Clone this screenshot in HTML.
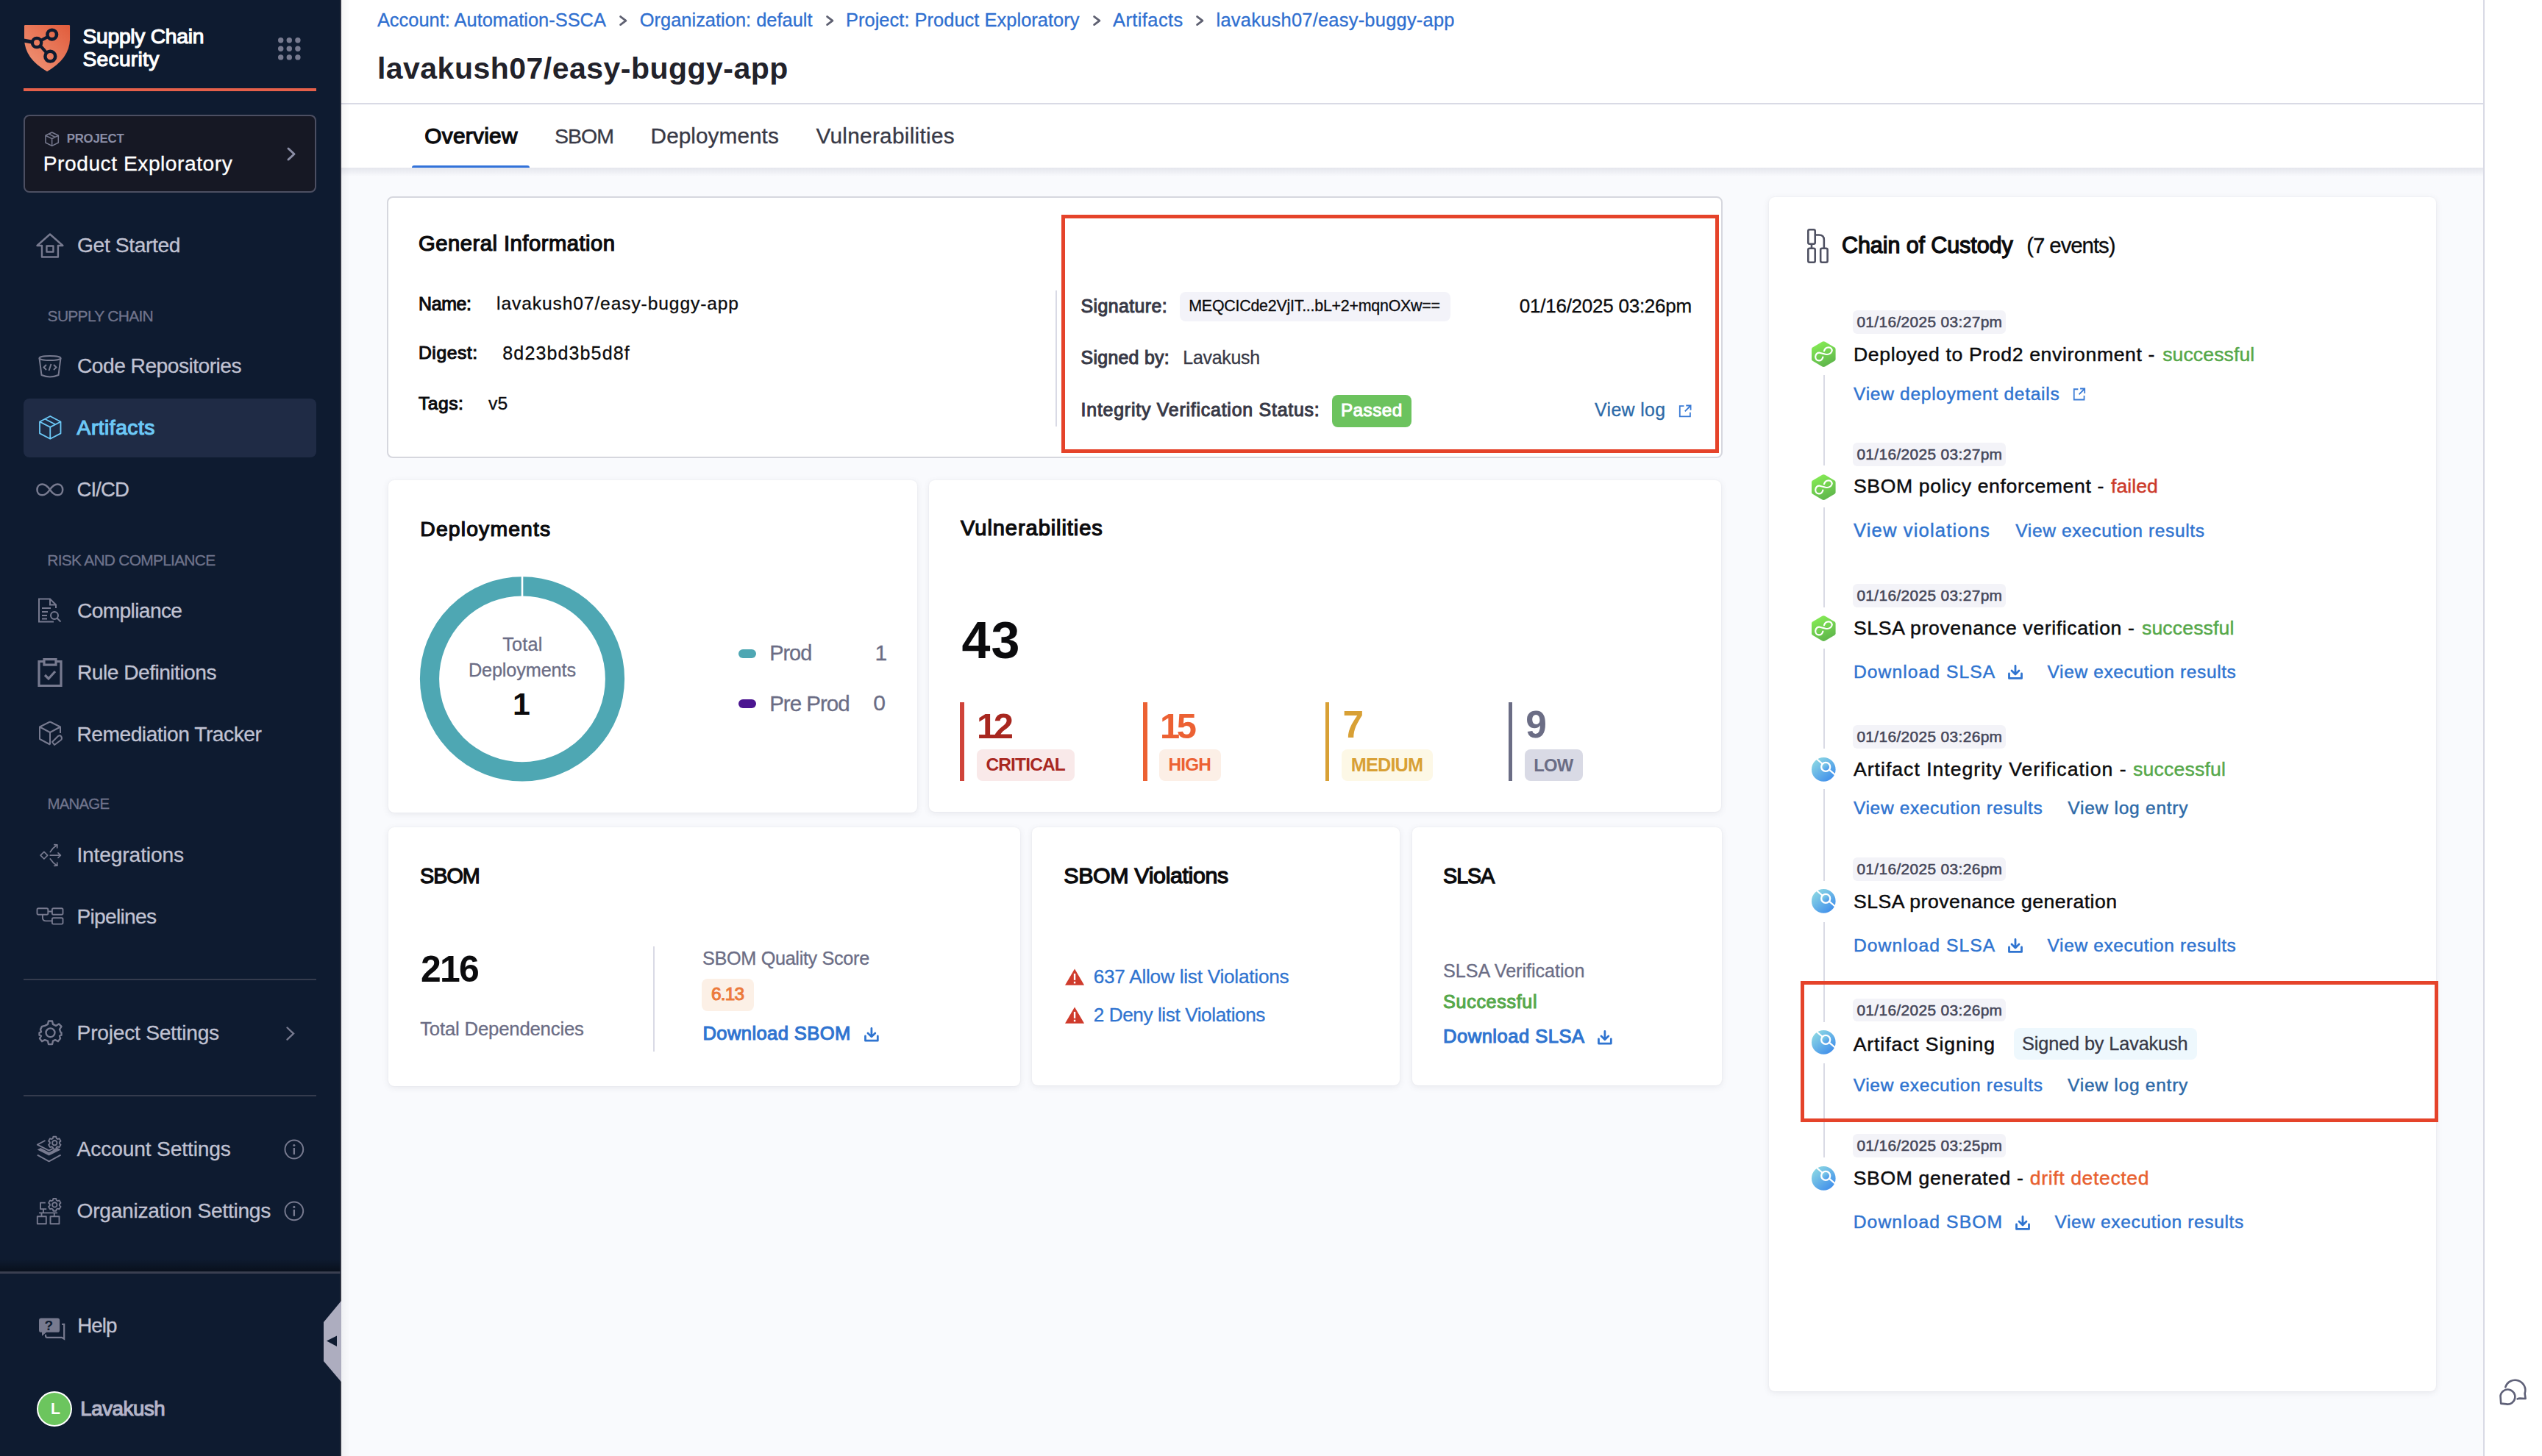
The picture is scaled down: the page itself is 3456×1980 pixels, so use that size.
<!DOCTYPE html>
<html><head><meta charset="utf-8"><title>Artifact Overview</title>
<style>
html,body{margin:0;padding:0;width:3456px;height:1980px;overflow:hidden;background:#f9fafd;}
body{position:relative;font-family:"Liberation Sans",sans-serif;}
.t{position:absolute;white-space:nowrap;line-height:1;}
.r{position:absolute;box-sizing:border-box;}
svg.r{overflow:visible;}
</style></head><body>
<div class="r" style="left:0.00px;top:0.00px;width:464.00px;height:1980.00px;background:#0e1b30;"></div>
<div class="r" style="left:462.00px;top:0.00px;width:2.00px;height:1980.00px;background:#2e3240;"></div>
<div class="r" style="left:464.00px;top:0.00px;width:2912.00px;height:228.00px;background:#fff;"></div>
<div class="r" style="left:464.00px;top:140.00px;width:2912.00px;height:2.00px;background:#d9dae5;"></div>
<div class="r" style="left:464.00px;top:228.00px;width:2912.00px;height:12.00px;background:linear-gradient(rgba(200,202,214,0.42),rgba(249,250,253,0));"></div>
<div class="r" style="left:464.00px;top:0.00px;width:12.00px;height:1980.00px;background:linear-gradient(90deg,rgba(0,0,0,0.04),rgba(0,0,0,0));"></div>
<div class="r" style="left:3376.00px;top:0.00px;width:2.00px;height:1980.00px;background:#d9dae5;"></div>
<div class="r" style="left:3378.00px;top:0.00px;width:78.00px;height:1980.00px;background:#fff;"></div>
<svg class="r" style="left:33.05px;top:33.85px;width:62.05px;height:63.15px;" viewBox="0 0 62 63" preserveAspectRatio="none"><defs><linearGradient id="lg" x1="0" y1="1" x2="1" y2="0"><stop offset="0" stop-color="#f0977a"/><stop offset="1" stop-color="#e15c3c"/></linearGradient></defs><path d="M0 1.2 Q0 0 1.2 0 L60.8 0 Q62 0 62 1.2 L62 20 Q61 46 31 63 Q1 46 0 20 Z" fill="url(#lg)"/><g fill="none" stroke="#0e1b30"><circle cx="17.05" cy="24" r="6.15" stroke-width="4.3"/><circle cx="37.7" cy="13" r="6.3" stroke-width="4.6"/><circle cx="35.3" cy="42.55" r="6.9" stroke-width="4.5"/><path d="M22.5 21 L32.2 15.8 M21.8 28.2 L30.2 37.5" stroke-width="4.2"/><path d="M-1 21 L11.2 23.2" stroke-width="5"/></g></svg>
<div class="t" style="left:112.50px;top:35.33px;font-size:28.20px;color:#fff;letter-spacing:-0.255px;-webkit-text-stroke:1.18px #fff;">Supply Chain</div>
<div class="t" style="left:112.50px;top:65.53px;font-size:28.20px;color:#fff;letter-spacing:0.271px;-webkit-text-stroke:1.18px #fff;">Security</div>
<svg class="r" style="left:378.00px;top:51.40px;width:31.00px;height:30.60px;" viewBox="0 0 31 30.6" preserveAspectRatio="none"><g fill="#777a8f"><circle cx="3.7" cy="3.7" r="3.7"/><circle cx="3.7" cy="15.3" r="3.7"/><circle cx="3.7" cy="26.9" r="3.7"/><circle cx="15.3" cy="3.7" r="3.7"/><circle cx="15.3" cy="15.3" r="3.7"/><circle cx="15.3" cy="26.9" r="3.7"/><circle cx="26.9" cy="3.7" r="3.7"/><circle cx="26.9" cy="15.3" r="3.7"/><circle cx="26.9" cy="26.9" r="3.7"/></g></svg>
<div class="r" style="left:32.00px;top:119.60px;width:398.00px;height:4.40px;background:#e5604a;"></div>
<div class="r" style="left:32.00px;top:156.20px;width:398.10px;height:105.60px;background:#161824;border:2px solid #4c4f62;border-radius:8px;"></div>
<svg class="r" style="left:60.50px;top:178.90px;width:19.30px;height:20.30px;" viewBox="0 0 20 21" preserveAspectRatio="none"><g fill="none" stroke="#777a8f" stroke-width="1.6" stroke-linejoin="round"><path d="M10 1 L19 5.5 L19 15.5 L10 20 L1 15.5 L1 5.5 Z M1 5.5 L10 10 L19 5.5 M10 10 L10 20 M5.5 3.2 L14.5 7.8"/></g></svg>
<div class="t" style="left:90.70px;top:180.62px;font-size:16.86px;color:#8b8ea6;font-weight:700;letter-spacing:-0.267px;">PROJECT</div>
<div class="t" style="left:58.80px;top:208.23px;font-size:28.20px;color:#ffffff;letter-spacing:0.522px;-webkit-text-stroke:0.3px #ffffff;">Product Exploratory</div>
<svg class="r" style="left:390.00px;top:199.50px;width:12.00px;height:19.00px;" viewBox="0 0 12 19" preserveAspectRatio="none"><path d="M2 2 L10 9.5 L2 17" fill="none" stroke="#8b8ea6" stroke-width="3" stroke-linecap="round" stroke-linejoin="round"/></svg>
<div class="t" style="left:105.00px;top:319.33px;font-size:28.20px;color:#c0c2d2;letter-spacing:-0.360px;-webkit-text-stroke:0.3px #c0c2d2;">Get Started</div>
<svg class="r" style="left:49.00px;top:317.00px;width:37.90px;height:34.00px;" viewBox="0 0 38 34" preserveAspectRatio="none"><g fill="none" stroke="#777a8f" stroke-width="2.4" stroke-linejoin="round"><path d="M1.5 17 L19 1.5 L36.5 17 L30 17 L30 32.5 L8 32.5 L8 17 Z"/><rect x="14.5" y="17.5" width="9" height="8"/></g></svg>
<div class="t" style="left:64.60px;top:419.00px;font-size:21.02px;color:#70748c;letter-spacing:-0.736px;-webkit-text-stroke:0.3px #70748c;">SUPPLY CHAIN</div>
<div class="t" style="left:105.00px;top:483.03px;font-size:28.20px;color:#c0c2d2;letter-spacing:-0.519px;-webkit-text-stroke:0.3px #c0c2d2;">Code Repositories</div>
<svg class="r" style="left:52.00px;top:483.00px;width:32.00px;height:31.00px;" viewBox="0 0 32 31" preserveAspectRatio="none"><g fill="none" stroke="#777a8f" stroke-width="2"><ellipse cx="16" cy="4" rx="14.5" ry="3"/><path d="M1.5 4 L4.5 27 Q16 32 27.5 27 L30.5 4"/><path d="M11 13 L7.5 16.5 L11 20 M21 13 L24.5 16.5 L21 20 M17.5 12 L14.5 21"/></g></svg>
<div class="r" style="left:32.00px;top:542.00px;width:397.80px;height:79.70px;background:#1f2b45;border-radius:8px;"></div>
<svg class="r" style="left:52.70px;top:565.40px;width:30.50px;height:32.80px;" viewBox="0 0 30 33" preserveAspectRatio="none"><g fill="none" stroke="#6cc8f6" stroke-width="1.8" stroke-linejoin="round"><path d="M15 1 L29 8.5 L29 24.5 L15 32 L1 24.5 L1 8.5 Z M1 8.5 L15 16 L29 8.5 M15 16 L15 32 M8 4.8 L22 12.3"/></g></svg>
<div class="t" style="left:104.60px;top:567.13px;font-size:28.20px;color:#6cc8f6;letter-spacing:0.488px;-webkit-text-stroke:1.18px #6cc8f6;">Artifacts</div>
<svg class="r" style="left:49.20px;top:657.00px;width:37.70px;height:17.80px;" viewBox="0 0 38 18" preserveAspectRatio="none"><path d="M19 9 C15 3 12 1.5 8.5 1.5 C4.5 1.5 1.5 4.5 1.5 9 C1.5 13.5 4.5 16.5 8.5 16.5 C12 16.5 15 15 19 9 C23 3 26 1.5 29.5 1.5 C33.5 1.5 36.5 4.5 36.5 9 C36.5 13.5 33.5 16.5 29.5 16.5 C26 16.5 23 15 19 9 Z" fill="none" stroke="#777a8f" stroke-width="2.6"/></svg>
<div class="t" style="left:104.60px;top:651.87px;font-size:27.56px;color:#c0c2d2;letter-spacing:-0.950px;-webkit-text-stroke:0.3px #c0c2d2;">CI/CD</div>
<div class="t" style="left:64.30px;top:751.67px;font-size:20.94px;color:#70748c;letter-spacing:-0.733px;-webkit-text-stroke:0.3px #70748c;">RISK AND COMPLIANCE</div>
<div class="t" style="left:105.00px;top:815.73px;font-size:28.20px;color:#c0c2d2;letter-spacing:-0.644px;-webkit-text-stroke:0.3px #c0c2d2;">Compliance</div>
<svg class="r" style="left:51.00px;top:813.00px;width:33.00px;height:34.00px;" viewBox="0 0 33 34" preserveAspectRatio="none"><g fill="none" stroke="#777a8f" stroke-width="2"><path d="M22 32.5 L2 32.5 L2 1.5 L17 1.5 L25 9.5 L25 14"/><path d="M17 1.5 L17 9.5 L25 9.5"/><path d="M6 14 H18 M6 19 H14 M6 24 H13 M6 28.5 H13"/><circle cx="23" cy="24" r="5"/><path d="M26.5 27.5 L31.5 32.5"/></g></svg>
<div class="t" style="left:105.00px;top:899.73px;font-size:28.20px;color:#c0c2d2;letter-spacing:-0.527px;-webkit-text-stroke:0.3px #c0c2d2;">Rule Definitions</div>
<svg class="r" style="left:51.00px;top:895.00px;width:34.00px;height:39.00px;" viewBox="0 0 34 39" preserveAspectRatio="none"><g fill="none" stroke="#777a8f" stroke-width="3.2"><path d="M8.5 4.5 L2 4.5 L2 37.5 L32 37.5 L32 4.5 L25.5 4.5"/><rect x="9" y="1.6" width="16" height="7.5"/><path d="M10 23 L15 28 L24 18"/></g></svg>
<div class="t" style="left:104.40px;top:983.73px;font-size:28.20px;color:#c0c2d2;letter-spacing:-0.478px;-webkit-text-stroke:0.3px #c0c2d2;">Remediation Tracker</div>
<svg class="r" style="left:51.00px;top:980.00px;width:34.00px;height:34.00px;" viewBox="0 0 34 34" preserveAspectRatio="none"><g fill="none" stroke="#777a8f" stroke-width="2" stroke-linejoin="round"><path d="M17 1.5 L31 8.5 L31 17 M17 32.5 L3 25 L3 8.5 L17 1.5 M3 8.5 L17 16 L31 8.5 M17 16 L17 32.5"/><path d="M20 29 L28 21 Q31 19 32.5 22 Q34 25 31 27 L23 33 Z"/></g></svg>
<div class="t" style="left:64.40px;top:1082.76px;font-size:20.36px;color:#70748c;letter-spacing:-0.720px;-webkit-text-stroke:0.3px #70748c;">MANAGE</div>
<div class="t" style="left:104.40px;top:1148.13px;font-size:28.20px;color:#c0c2d2;letter-spacing:-0.145px;-webkit-text-stroke:0.3px #c0c2d2;">Integrations</div>
<svg class="r" style="left:44.00px;top:1140.00px;width:52.00px;height:130.00px;" viewBox="0 0 52 130" preserveAspectRatio="none"><g fill="none" stroke="#777a8f" stroke-width="1.7" stroke-linecap="round" stroke-linejoin="round"><path d="M15.9 18.4 L20.7 23.2 L15.9 28 L11.1 23.2 Z"/><path d="M24.3 23.2 H38.3 M35 19.9 L38.4 23.2 L35 26.5"/><path d="M24.3 18.6 Q28 12.5 33.8 9 M29.8 8.7 L33.9 8.9 L33.7 13"/><path d="M24.3 28 Q28 33.8 33.8 37.2 M29.8 37.4 L33.9 37.2 L33.7 33.2"/></g><g fill="none" stroke="#777a8f" stroke-width="1.9" stroke-linejoin="round"><rect x="6.5" y="95.3" width="14.8" height="8.4" rx="1.8"/><rect x="26.9" y="95.3" width="14.6" height="8.4" rx="1.8"/><rect x="26.9" y="108.2" width="14.6" height="8.4" rx="1.8"/><path d="M21.3 99.5 H26.9 M13.9 103.7 V108 Q13.9 112.4 18.5 112.4 H26.9"/></g></svg>
<div class="t" style="left:104.40px;top:1231.73px;font-size:28.20px;color:#c0c2d2;letter-spacing:-0.725px;-webkit-text-stroke:0.3px #c0c2d2;">Pipelines</div>
<div class="r" style="left:32.00px;top:1331.00px;width:398.00px;height:2.00px;background:#343b4d;"></div>
<div class="t" style="left:104.60px;top:1389.83px;font-size:28.20px;color:#c0c2d2;letter-spacing:-0.253px;-webkit-text-stroke:0.3px #c0c2d2;">Project Settings</div>
<svg class="r" style="left:51.60px;top:1387.40px;width:33.00px;height:34.60px;" viewBox="0 0 33 35" preserveAspectRatio="none"><g fill="none" stroke="#777a8f" stroke-width="2.4" stroke-linejoin="round"><path d="M14 1.5 H19 L20 6 L24 8 L28 5.5 L31.5 9 L29 13 L30.5 17 L31.5 17.5 V21 L29 22 L30 25.5 L27 29.5 L23 27.5 L20 29 L19 33.5 H14 L13 29 L9 27.5 L5 29.5 L2 25.5 L4 22 L1.5 21 V17.5 L4 16.5 L3 13 L5 9 L9 8 L13 6 Z"/><circle cx="16.5" cy="17.5" r="6"/></g></svg>
<svg class="r" style="left:389.00px;top:1395.60px;width:11.50px;height:19.20px;" viewBox="0 0 11.5 19.2" preserveAspectRatio="none"><path d="M1.5 1.5 L10 9.6 L1.5 17.7" fill="none" stroke="#777a8f" stroke-width="2.4" stroke-linecap="round"/></svg>
<div class="r" style="left:32.00px;top:1489.00px;width:398.00px;height:2.00px;background:#343b4d;"></div>
<div class="t" style="left:104.60px;top:1548.13px;font-size:28.20px;color:#c0c2d2;letter-spacing:-0.147px;-webkit-text-stroke:0.3px #c0c2d2;">Account Settings</div>
<svg class="r" style="left:44.00px;top:1535.00px;width:52.00px;height:140.00px;" viewBox="0 0 52 140" preserveAspectRatio="none"><g fill="none" stroke="#777a8f" stroke-width="1.9" stroke-linejoin="round"><path d="M27.83 13.08 L28.37 10.82 L32.23 10.82 L32.77 13.08 L34.36 14.00 L36.59 13.33 L38.52 16.69 L36.84 18.28 L36.84 20.12 L38.52 21.71 L36.59 25.07 L34.36 24.40 L32.77 25.32 L32.23 27.58 L28.37 27.58 L27.83 25.32 L26.24 24.40 L24.01 25.07 L22.08 21.71 L23.76 20.12 L23.76 18.28 L22.08 16.69 L24.01 13.33 L26.24 14.00 Z"/><circle cx="30.3" cy="19.2" r="3.2"/><path d="M17.5 16 L6.8 21.6 L22.6 29.6 L27.5 27.2"/><path d="M6.8 35.6 L22.6 44.4 L38.6 35.6"/><path d="M27.83 97.28 L28.37 95.02 L32.23 95.02 L32.77 97.28 L34.36 98.20 L36.59 97.53 L38.52 100.89 L36.84 102.48 L36.84 104.32 L38.52 105.91 L36.59 109.27 L34.36 108.60 L32.77 109.52 L32.23 111.78 L28.37 111.78 L27.83 109.52 L26.24 108.60 L24.01 109.27 L22.08 105.91 L23.76 104.32 L23.76 102.48 L22.08 100.89 L24.01 97.53 L26.24 98.20 Z"/><circle cx="30.3" cy="103.4" r="3.2"/><path d="M17.8 100.6 H11 V109.1 H19.2 M14.9 109.1 V114.4 M9.1 114.4 H34.1 M12.5 114.4 V119.2 M29.8 114.4 V119.2"/><rect x="6.8" y="119.3" width="12" height="10"/><rect x="24.5" y="119.3" width="12" height="10"/></g><path d="M6.8 28.4 L22.6 36.6 L38.6 28.4 L34.2 26.1 L22.6 31.9 L11.2 26.1 Z" fill="#777a8f"/></svg>
<svg class="r" style="left:386.00px;top:1548.60px;width:27.70px;height:28.00px;" viewBox="0 0 28 28" preserveAspectRatio="none"><g fill="none" stroke="#777a8f" stroke-width="2"><circle cx="14" cy="14" r="12.5"/></g><g fill="#777a8f"><circle cx="14" cy="8.5" r="1.6"/><rect x="12.8" y="12" width="2.4" height="9"/></g></svg>
<div class="t" style="left:104.60px;top:1632.43px;font-size:28.20px;color:#c0c2d2;letter-spacing:-0.290px;-webkit-text-stroke:0.3px #c0c2d2;">Organization Settings</div>
<svg class="r" style="left:386.00px;top:1633.00px;width:27.70px;height:27.70px;" viewBox="0 0 28 28" preserveAspectRatio="none"><g fill="none" stroke="#777a8f" stroke-width="2"><circle cx="14" cy="14" r="12.5"/></g><g fill="#777a8f"><circle cx="14" cy="8.5" r="1.6"/><rect x="12.8" y="12" width="2.4" height="9"/></g></svg>
<div class="r" style="left:0.00px;top:1712.00px;width:462.00px;height:17.00px;background:linear-gradient(rgba(0,0,0,0),rgba(0,0,0,0.4));"></div>
<div class="r" style="left:0.00px;top:1729.00px;width:463.00px;height:2.50px;background:#3a3f50;"></div>
<svg class="r" style="left:52.90px;top:1792.00px;width:35.20px;height:31.80px;" viewBox="0 0 35 32" preserveAspectRatio="none"><path d="M3 0.5 H25 Q28 0.5 28 3.5 V17 Q28 20 25 20 H10 L4 25 V20 H3 Q0 20 0 17 V3.5 Q0 0.5 3 0.5 Z" fill="#777a8f"/><path d="M31 9 H34 V29 L31 27 H11 Q9 27 9 25 V23" fill="none" stroke="#777a8f" stroke-width="2.2"/><text x="13.3" y="17.2" font-size="19" font-weight="700" text-anchor="middle" fill="#0e1b30" font-family="Liberation Sans">?</text></svg>
<div class="t" style="left:105.20px;top:1789.49px;font-size:27.77px;color:#c0c2d2;letter-spacing:-0.967px;-webkit-text-stroke:0.3px #c0c2d2;">Help</div>
<div class="r" style="left:49.90px;top:1891.80px;width:48.10px;height:48.20px;background:#6cc55e;border:2.5px solid #fff;border-radius:50%;"></div>
<div class="t" style="left:69.10px;top:1905.33px;font-size:21.22px;color:#fff;font-weight:700;">L</div>
<div class="t" style="left:109.20px;top:1902.22px;font-size:27.62px;color:#b4b5c9;letter-spacing:-0.386px;-webkit-text-stroke:1.16px #b4b5c9;">Lavakush</div>
<svg class="r" style="left:440.00px;top:1768.70px;width:24.00px;height:110.30px;" viewBox="0 0 24 110.3" preserveAspectRatio="none"><path d="M24 0 L24 110.3 L0 82 L0 29 Z" fill="#adadbf"/><path d="M4 54.5 L18 47.5 L18 62 Z" fill="#0e1b30"/></svg>
<div class="t" style="left:512.90px;top:15.06px;font-size:25.44px;color:#2f6fd0;-webkit-text-stroke:0.3px #2f6fd0;">Account: Automation-SSCA</div>
<div class="t" style="left:869.80px;top:15.06px;font-size:25.44px;color:#2f6fd0;-webkit-text-stroke:0.3px #2f6fd0;">Organization: default</div>
<div class="t" style="left:1150.00px;top:15.06px;font-size:25.44px;color:#2f6fd0;letter-spacing:0.030px;-webkit-text-stroke:0.3px #2f6fd0;">Project: Product Exploratory</div>
<div class="t" style="left:1513.00px;top:15.06px;font-size:25.44px;color:#2f6fd0;letter-spacing:0.425px;-webkit-text-stroke:0.3px #2f6fd0;">Artifacts</div>
<div class="t" style="left:1653.60px;top:15.06px;font-size:25.44px;color:#2f6fd0;letter-spacing:0.238px;-webkit-text-stroke:0.3px #2f6fd0;">lavakush07/easy-buggy-app</div>
<svg class="r" style="left:841.70px;top:21.00px;width:10.50px;height:14.20px;" viewBox="0 0 10.5 14.2" preserveAspectRatio="none"><path d="M1.6 1.6 L8.9 7.1 L1.6 12.6" fill="none" stroke="#5f6172" stroke-width="2.8" stroke-linecap="round" stroke-linejoin="round"/></svg>
<svg class="r" style="left:1122.60px;top:21.00px;width:10.50px;height:14.20px;" viewBox="0 0 10.5 14.2" preserveAspectRatio="none"><path d="M1.6 1.6 L8.9 7.1 L1.6 12.6" fill="none" stroke="#5f6172" stroke-width="2.8" stroke-linecap="round" stroke-linejoin="round"/></svg>
<svg class="r" style="left:1486.00px;top:21.00px;width:10.50px;height:14.20px;" viewBox="0 0 10.5 14.2" preserveAspectRatio="none"><path d="M1.6 1.6 L8.9 7.1 L1.6 12.6" fill="none" stroke="#5f6172" stroke-width="2.8" stroke-linecap="round" stroke-linejoin="round"/></svg>
<svg class="r" style="left:1626.00px;top:21.00px;width:10.50px;height:14.20px;" viewBox="0 0 10.5 14.2" preserveAspectRatio="none"><path d="M1.6 1.6 L8.9 7.1 L1.6 12.6" fill="none" stroke="#5f6172" stroke-width="2.8" stroke-linecap="round" stroke-linejoin="round"/></svg>
<div class="t" style="left:512.90px;top:72.69px;font-size:41.00px;color:#22222a;font-weight:700;letter-spacing:0.483px;">lavakush07/easy-buggy-app</div>
<div class="t" style="left:577.30px;top:169.77px;font-size:29.80px;color:#0b0b0d;letter-spacing:0.286px;-webkit-text-stroke:1.25px #0b0b0d;">Overview</div>
<div class="t" style="left:754.00px;top:170.84px;font-size:28.53px;color:#383946;letter-spacing:-1.000px;-webkit-text-stroke:0.3px #383946;">SBOM</div>
<div class="t" style="left:884.60px;top:169.77px;font-size:29.80px;color:#383946;letter-spacing:0.030px;-webkit-text-stroke:0.3px #383946;">Deployments</div>
<div class="t" style="left:1109.40px;top:169.77px;font-size:29.80px;color:#383946;letter-spacing:0.279px;-webkit-text-stroke:0.3px #383946;">Vulnerabilities</div>
<div class="r" style="left:560.00px;top:224.50px;width:160.00px;height:3.50px;background:#3272d9;border-radius:3px 3px 0 0;"></div>
<div class="r" style="left:526.00px;top:266.80px;width:1816.00px;height:356.20px;background:#fff;border:2px solid #d6d7de;border-radius:8px;"></div>
<div class="t" style="left:569.00px;top:316.96px;font-size:29.22px;color:#0b0b0d;letter-spacing:0.489px;-webkit-text-stroke:1.23px #0b0b0d;">General Information</div>
<div class="t" style="left:569.00px;top:400.96px;font-size:24.86px;color:#0b0b0d;letter-spacing:-0.300px;-webkit-text-stroke:1.04px #0b0b0d;">Name:</div>
<div class="t" style="left:675.10px;top:401.17px;font-size:24.60px;color:#0b0b0d;letter-spacing:0.888px;-webkit-text-stroke:0.3px #0b0b0d;">lavakush07/easy-buggy-app</div>
<div class="t" style="left:569.00px;top:468.48px;font-size:24.71px;color:#0b0b0d;letter-spacing:0.533px;-webkit-text-stroke:1.04px #0b0b0d;">Digest:</div>
<div class="t" style="left:683.30px;top:468.21px;font-size:25.03px;color:#0b0b0d;letter-spacing:1.127px;-webkit-text-stroke:0.3px #0b0b0d;">8d23bd3b5d8f</div>
<div class="t" style="left:569.00px;top:536.68px;font-size:24.71px;color:#0b0b0d;letter-spacing:0.475px;-webkit-text-stroke:1.04px #0b0b0d;">Tags:</div>
<div class="t" style="left:664.00px;top:536.68px;font-size:24.71px;color:#0b0b0d;letter-spacing:0.100px;-webkit-text-stroke:0.3px #0b0b0d;">v5</div>
<div class="r" style="left:1435.00px;top:395.00px;width:2.00px;height:185.00px;background:#d9dae5;"></div>
<div class="t" style="left:1469.60px;top:403.76px;font-size:24.86px;color:#383946;letter-spacing:0.422px;-webkit-text-stroke:1.04px #383946;">Signature:</div>
<div class="r" style="left:1604.00px;top:397.30px;width:367.80px;height:39.40px;background:#f3f3f9;border-radius:8px;"></div>
<div class="t" style="left:1616.30px;top:405.81px;font-size:21.37px;color:#0b0b0d;letter-spacing:-0.218px;-webkit-text-stroke:0.3px #0b0b0d;">MEQCICde2VjIT...bL+2+mqnOXw==</div>
<div class="t" style="left:2065.80px;top:402.97px;font-size:26.02px;color:#0b0b0d;letter-spacing:-0.253px;-webkit-text-stroke:0.3px #0b0b0d;">01/16/2025 03:26pm</div>
<div class="t" style="left:1469.60px;top:473.66px;font-size:24.86px;color:#383946;letter-spacing:0.289px;-webkit-text-stroke:1.04px #383946;">Signed by:</div>
<div class="t" style="left:1608.30px;top:473.66px;font-size:24.86px;color:#383946;letter-spacing:-0.243px;-webkit-text-stroke:0.3px #383946;">Lavakush</div>
<div class="t" style="left:1469.60px;top:545.46px;font-size:24.86px;color:#383946;letter-spacing:0.790px;-webkit-text-stroke:1.04px #383946;">Integrity Verification Status:</div>
<div class="r" style="left:1811.00px;top:537.30px;width:107.80px;height:43.50px;background:#6cc35e;border-radius:8px;"></div>
<div class="t" style="left:1823.00px;top:545.95px;font-size:24.27px;color:#fff;letter-spacing:0.440px;-webkit-text-stroke:1.02px #fff;">Passed</div>
<div class="t" style="left:2168.00px;top:545.26px;font-size:24.86px;color:#2d6aa8;letter-spacing:0.371px;-webkit-text-stroke:0.3px #2d6aa8;">View log</div>
<svg class="r" style="left:2282.00px;top:550.00px;width:18.20px;height:17.70px;" viewBox="0 0 18.2 17.7" preserveAspectRatio="none"><g fill="none" stroke="#3a7bd5" stroke-width="1.8"><path d="M7.5 2.2 H1.8 V16.3 H15.9 V10.8"/><path d="M10.3 1.5 H16.6 V7.8 M16.6 1.5 L8.8 9.3"/></g></svg>
<div class="r" style="left:1443.00px;top:291.60px;width:894.40px;height:324.00px;border:5.5px solid #e5432a;"></div>
<div class="r" style="left:528.00px;top:653.00px;width:719.00px;height:452.00px;background:#fff;border-radius:8px;box-shadow:0 0 2px rgba(40,41,61,0.06),0 2px 8px rgba(96,97,112,0.12);"></div>
<div class="t" style="left:571.30px;top:704.80px;font-size:28.34px;color:#0b0b0d;letter-spacing:1.160px;-webkit-text-stroke:1.19px #0b0b0d;">Deployments</div>
<svg class="r" style="left:571.30px;top:783.80px;width:278.00px;height:278.60px;" viewBox="0 0 278 278.6" preserveAspectRatio="none"><circle cx="139" cy="139.3" r="126" fill="none" stroke="#4ea7b3" stroke-width="26.2"/><rect x="137.7" y="0" width="2.6" height="28" fill="#fff"/></svg>
<div class="t" style="left:683.20px;top:863.59px;font-size:25.29px;color:#6b6d85;letter-spacing:0.175px;-webkit-text-stroke:0.3px #6b6d85;">Total</div>
<div class="t" style="left:636.90px;top:898.99px;font-size:25.29px;color:#6b6d85;letter-spacing:-0.140px;-webkit-text-stroke:0.3px #6b6d85;">Deployments</div>
<div class="t" style="left:697.00px;top:936.30px;font-size:42.88px;color:#0b0b0d;font-weight:700;">1</div>
<div class="r" style="left:1004.00px;top:882.90px;width:24.10px;height:12.00px;background:#4ea7b3;border-radius:6px;"></div>
<div class="r" style="left:1004.00px;top:951.10px;width:24.10px;height:11.80px;background:#4b1590;border-radius:6px;"></div>
<div class="t" style="left:1046.20px;top:874.41px;font-size:28.92px;color:#6b6d85;letter-spacing:-1.000px;-webkit-text-stroke:0.3px #6b6d85;">Prod</div>
<div class="t" style="left:1189.50px;top:873.43px;font-size:30.09px;color:#6b6d85;-webkit-text-stroke:0.3px #6b6d85;">1</div>
<div class="t" style="left:1046.20px;top:941.89px;font-size:29.53px;color:#6b6d85;letter-spacing:-1.014px;-webkit-text-stroke:0.3px #6b6d85;">Pre Prod</div>
<div class="t" style="left:1187.20px;top:941.43px;font-size:30.09px;color:#6b6d85;-webkit-text-stroke:0.3px #6b6d85;">0</div>
<div class="r" style="left:1263.00px;top:653.00px;width:1077.00px;height:451.00px;background:#fff;border-radius:8px;box-shadow:0 0 2px rgba(40,41,61,0.06),0 2px 8px rgba(96,97,112,0.12);"></div>
<div class="t" style="left:1306.10px;top:704.19px;font-size:29.07px;color:#0b0b0d;letter-spacing:0.921px;-webkit-text-stroke:1.22px #0b0b0d;">Vulnerabilities</div>
<div class="t" style="left:1307.40px;top:835.58px;font-size:70.06px;color:#0b0b0d;font-weight:700;letter-spacing:1.100px;">43</div>
<div class="r" style="left:1305.30px;top:955.20px;width:5.80px;height:107.20px;background:#d0443a;"></div>
<div class="t" style="left:1328.00px;top:962.67px;font-size:48.82px;color:#a8271f;font-weight:700;letter-spacing:-4.400px;">12</div>
<div class="r" style="left:1327.50px;top:1019.00px;width:133.90px;height:43.40px;background:#f9e9e9;border-radius:8px;"></div>
<div class="t" style="left:1340.40px;top:1028.22px;font-size:24.54px;color:#a8271f;font-weight:700;letter-spacing:-0.857px;">CRITICAL</div>
<div class="r" style="left:1553.80px;top:955.20px;width:5.80px;height:107.20px;background:#ec6133;"></div>
<div class="t" style="left:1577.10px;top:962.67px;font-size:48.82px;color:#ec6133;font-weight:700;letter-spacing:-4.400px;">15</div>
<div class="r" style="left:1575.80px;top:1019.00px;width:84.20px;height:43.40px;background:#fcefe6;border-radius:8px;"></div>
<div class="t" style="left:1588.50px;top:1028.39px;font-size:24.34px;color:#ec6133;font-weight:700;letter-spacing:-0.800px;">HIGH</div>
<div class="r" style="left:1801.70px;top:955.20px;width:5.80px;height:107.20px;background:#d8a035;"></div>
<div class="t" style="left:1825.60px;top:960.43px;font-size:51.45px;color:#d8a035;font-weight:700;">7</div>
<div class="r" style="left:1823.70px;top:1019.00px;width:123.90px;height:43.40px;background:#fdf8e6;border-radius:8px;"></div>
<div class="t" style="left:1836.70px;top:1027.57px;font-size:25.31px;color:#d8a035;font-weight:700;letter-spacing:-0.840px;">MEDIUM</div>
<div class="r" style="left:2050.60px;top:955.20px;width:5.80px;height:107.20px;background:#6b6d85;"></div>
<div class="t" style="left:2074.30px;top:960.43px;font-size:51.45px;color:#6b6d85;font-weight:700;">9</div>
<div class="r" style="left:2072.70px;top:1019.00px;width:79.20px;height:43.40px;background:#d9dae5;border-radius:8px;"></div>
<div class="t" style="left:2085.20px;top:1028.83px;font-size:23.82px;color:#6b6d85;font-weight:700;letter-spacing:-0.800px;">LOW</div>
<div class="r" style="left:528.00px;top:1125.00px;width:859.00px;height:352.00px;background:#fff;border-radius:8px;box-shadow:0 0 2px rgba(40,41,61,0.06),0 2px 8px rgba(96,97,112,0.12);"></div>
<div class="t" style="left:571.00px;top:1176.68px;font-size:28.72px;color:#0b0b0d;letter-spacing:-0.967px;-webkit-text-stroke:1.27px #0b0b0d;">SBOM</div>
<div class="t" style="left:572.10px;top:1293.74px;font-size:49.91px;color:#0b0b0d;font-weight:700;letter-spacing:-1.750px;">216</div>
<div class="t" style="left:571.20px;top:1387.22px;font-size:25.73px;color:#6b6d85;letter-spacing:-0.188px;-webkit-text-stroke:0.3px #6b6d85;">Total Dependencies</div>
<div class="r" style="left:888.00px;top:1287.00px;width:2.00px;height:143.00px;background:#d9dae5;"></div>
<div class="t" style="left:954.90px;top:1291.39px;font-size:25.29px;color:#6b6d85;letter-spacing:-0.347px;-webkit-text-stroke:0.3px #6b6d85;">SBOM Quality Score</div>
<div class="r" style="left:954.10px;top:1331.20px;width:70.70px;height:43.50px;background:#fcf0e6;border-radius:8px;"></div>
<div class="t" style="left:967.00px;top:1340.31px;font-size:24.44px;color:#ec7a3c;letter-spacing:-0.833px;-webkit-text-stroke:1.07px #ec7a3c;">6.13</div>
<div class="t" style="left:955.40px;top:1393.24px;font-size:25.58px;color:#2f74d0;letter-spacing:0.400px;-webkit-text-stroke:1.07px #2f74d0;">Download SBOM</div>
<svg class="r" style="left:1175.20px;top:1397.30px;width:19.80px;height:19.80px;" viewBox="0 0 20 20" preserveAspectRatio="none"><g fill="none" stroke="#2f74d0" stroke-width="2.8" stroke-linecap="round" stroke-linejoin="round"><path d="M10 1.5 V12.5 M5 8 L10 13 L15 8"/><path d="M1.5 12 V18.4 H18.5 V12"/></g></svg>
<div class="r" style="left:1403.00px;top:1125.00px;width:500.00px;height:351.00px;background:#fff;border-radius:8px;box-shadow:0 0 2px rgba(40,41,61,0.06),0 2px 8px rgba(96,97,112,0.12);"></div>
<div class="t" style="left:1446.30px;top:1175.48px;font-size:30.38px;color:#0b0b0d;letter-spacing:-0.364px;-webkit-text-stroke:1.28px #0b0b0d;">SBOM Violations</div>
<svg class="r" style="left:1448.00px;top:1317.10px;width:26.10px;height:22.80px;" viewBox="0 0 26 23" preserveAspectRatio="none"><path d="M13 0.5 L26 23 L0 23 Z" fill="#cf3b2c"/><rect x="11.8" y="7" width="2.4" height="9" fill="#fff"/><rect x="11.8" y="18" width="2.4" height="2.6" fill="#fff"/></svg>
<div class="t" style="left:1486.70px;top:1314.65px;font-size:26.16px;color:#2f74d0;letter-spacing:-0.229px;-webkit-text-stroke:0.3px #2f74d0;">637 Allow list Violations</div>
<svg class="r" style="left:1448.00px;top:1369.10px;width:26.10px;height:22.70px;" viewBox="0 0 26 23" preserveAspectRatio="none"><path d="M13 0.5 L26 23 L0 23 Z" fill="#cf3b2c"/><rect x="11.8" y="7" width="2.4" height="9" fill="#fff"/><rect x="11.8" y="18" width="2.4" height="2.6" fill="#fff"/></svg>
<div class="t" style="left:1486.70px;top:1366.65px;font-size:26.16px;color:#2f74d0;letter-spacing:-0.410px;-webkit-text-stroke:0.3px #2f74d0;">2 Deny list Violations</div>
<div class="r" style="left:1919.50px;top:1125.00px;width:421.00px;height:351.00px;background:#fff;border-radius:8px;box-shadow:0 0 2px rgba(40,41,61,0.06),0 2px 8px rgba(96,97,112,0.12);"></div>
<div class="t" style="left:1962.10px;top:1176.76px;font-size:28.63px;color:#0b0b0d;letter-spacing:-1.000px;-webkit-text-stroke:1.27px #0b0b0d;">SLSA</div>
<div class="t" style="left:1962.10px;top:1307.91px;font-size:25.15px;color:#6b6d85;letter-spacing:-0.037px;-webkit-text-stroke:0.3px #6b6d85;">SLSA Verification</div>
<div class="t" style="left:1962.10px;top:1349.71px;font-size:25.15px;color:#56a84a;letter-spacing:0.656px;-webkit-text-stroke:1.06px #56a84a;">Successful</div>
<div class="t" style="left:1962.10px;top:1397.04px;font-size:25.58px;color:#2f74d0;letter-spacing:0.467px;-webkit-text-stroke:1.07px #2f74d0;">Download SLSA</div>
<svg class="r" style="left:2172.10px;top:1401.30px;width:19.80px;height:19.70px;" viewBox="0 0 20 20" preserveAspectRatio="none"><g fill="none" stroke="#2f74d0" stroke-width="2.8" stroke-linecap="round" stroke-linejoin="round"><path d="M10 1.5 V12.5 M5 8 L10 13 L15 8"/><path d="M1.5 12 V18.4 H18.5 V12"/></g></svg>
<div class="r" style="left:2405.00px;top:268.00px;width:906.60px;height:1623.60px;background:#fff;border-radius:8px;box-shadow:0 0 2px rgba(40,41,61,0.06),0 2px 8px rgba(96,97,112,0.12);"></div>
<svg class="r" style="left:2457.20px;top:311.00px;width:28.80px;height:47.00px;" viewBox="0 0 29 47" preserveAspectRatio="none"><g fill="none" stroke="#4f5162" stroke-width="2.6" stroke-linejoin="round"><rect x="1.3" y="1.3" width="9.5" height="19.5" rx="2"/><rect x="1.3" y="26.7" width="9.5" height="19" rx="2"/><rect x="18.3" y="26.7" width="9.5" height="19" rx="2"/><path d="M10.8 8.5 H16 Q23 8.5 23 15 V26.7 M6 20.8 V26.7"/></g></svg>
<div class="t" style="left:2504.00px;top:318.46px;font-size:30.52px;color:#0b0b0d;letter-spacing:-0.093px;-webkit-text-stroke:1.28px #0b0b0d;">Chain of Custody</div>
<div class="t" style="left:2755.20px;top:319.44px;font-size:29.36px;color:#0b0b0d;letter-spacing:-1.033px;-webkit-text-stroke:0.3px #0b0b0d;">(7 events)</div>
<div class="r" style="left:2479.00px;top:510.30px;width:2.00px;height:123.20px;background:#d9dae5;"></div>
<div class="r" style="left:2479.00px;top:690.00px;width:2.00px;height:135.70px;background:#d9dae5;"></div>
<div class="r" style="left:2479.00px;top:882.40px;width:2.00px;height:135.40px;background:#d9dae5;"></div>
<div class="r" style="left:2479.00px;top:1073.00px;width:2.00px;height:125.10px;background:#d9dae5;"></div>
<div class="r" style="left:2479.00px;top:1254.00px;width:2.00px;height:135.80px;background:#d9dae5;"></div>
<div class="r" style="left:2479.00px;top:1446.40px;width:2.00px;height:127.50px;background:#d9dae5;"></div>
<div class="r" style="left:2519.40px;top:422.00px;width:207.60px;height:31.50px;background:#f3f3f8;border-radius:6px;"></div>
<div class="t" style="left:2524.40px;top:427.88px;font-size:20.93px;color:#45475a;letter-spacing:0.335px;-webkit-text-stroke:0.55px #45475a;">01/16/2025 03:27pm</div>
<svg class="r" style="left:2462.60px;top:464.30px;width:32.60px;height:35.40px;" viewBox="0 0 32.6 35.6" preserveAspectRatio="none"><defs><linearGradient id="hg" x1="0.3" y1="0" x2="0.7" y2="1"><stop offset="0" stop-color="#86ec55"/><stop offset="1" stop-color="#5db34b"/></linearGradient></defs><path d="M16.3 0.3 Q17.3 0.3 18.2 0.8 L31.3 8.5 Q32.6 9.3 32.6 10.8 V24.6 Q32.6 26.1 31.3 26.9 L18.2 34.6 Q16.3 35.6 14.4 34.6 L1.3 26.9 Q0 26.1 0 24.6 V10.8 Q0 9.3 1.3 8.5 L14.4 0.8 Q15.3 0.3 16.3 0.3 Z" fill="url(#hg)"/><path d="M15.4 21.7 C14.8 24.5 12.5 26.8 10 26.6 C7 26.4 5 24 5.2 21 C5.4 17.5 8 15.4 11 15.8 L19 17.9 C22 18.4 26 17.5 27.4 14 C28.5 11 26 8.3 23 8.4 C20 8.5 17.8 10.5 17 13.4" fill="none" stroke="#fff" stroke-width="2.2" stroke-linecap="round"/></svg>
<div class="t" style="left:2520.00px;top:469.08px;font-size:26.60px;color:#0b0b0d;letter-spacing:0.640px;-webkit-text-stroke:0.45px #0b0b0d;">Deployed to Prod2 environment -</div>
<div class="t" style="left:2940.20px;top:469.08px;font-size:26.60px;color:#56a84a;letter-spacing:0.100px;-webkit-text-stroke:0.45px #56a84a;">successful</div>
<div class="t" style="left:2520.00px;top:523.60px;font-size:24.56px;color:#2f74d0;letter-spacing:0.700px;-webkit-text-stroke:0.45px #2f74d0;">View deployment details</div>
<svg class="r" style="left:2818.10px;top:526.80px;width:17.80px;height:17.90px;" viewBox="0 0 18.2 17.7" preserveAspectRatio="none"><g fill="none" stroke="#3a7bd5" stroke-width="1.8"><path d="M7.5 2.2 H1.8 V16.3 H15.9 V10.8"/><path d="M10.3 1.5 H16.6 V7.8 M16.6 1.5 L8.8 9.3"/></g></svg>
<div class="r" style="left:2519.40px;top:602.30px;width:207.60px;height:31.50px;background:#f3f3f8;border-radius:6px;"></div>
<div class="t" style="left:2524.40px;top:608.18px;font-size:20.93px;color:#45475a;letter-spacing:0.335px;-webkit-text-stroke:0.55px #45475a;">01/16/2025 03:27pm</div>
<svg class="r" style="left:2462.60px;top:644.60px;width:32.60px;height:35.40px;" viewBox="0 0 32.6 35.6" preserveAspectRatio="none"><defs><linearGradient id="hg" x1="0.3" y1="0" x2="0.7" y2="1"><stop offset="0" stop-color="#86ec55"/><stop offset="1" stop-color="#5db34b"/></linearGradient></defs><path d="M16.3 0.3 Q17.3 0.3 18.2 0.8 L31.3 8.5 Q32.6 9.3 32.6 10.8 V24.6 Q32.6 26.1 31.3 26.9 L18.2 34.6 Q16.3 35.6 14.4 34.6 L1.3 26.9 Q0 26.1 0 24.6 V10.8 Q0 9.3 1.3 8.5 L14.4 0.8 Q15.3 0.3 16.3 0.3 Z" fill="url(#hg)"/><path d="M15.4 21.7 C14.8 24.5 12.5 26.8 10 26.6 C7 26.4 5 24 5.2 21 C5.4 17.5 8 15.4 11 15.8 L19 17.9 C22 18.4 26 17.5 27.4 14 C28.5 11 26 8.3 23 8.4 C20 8.5 17.8 10.5 17 13.4" fill="none" stroke="#fff" stroke-width="2.2" stroke-linecap="round"/></svg>
<div class="t" style="left:2520.00px;top:648.38px;font-size:26.60px;color:#0b0b0d;letter-spacing:0.633px;-webkit-text-stroke:0.45px #0b0b0d;">SBOM policy enforcement -</div>
<div class="t" style="left:2870.00px;top:648.38px;font-size:26.60px;color:#cc3a2a;letter-spacing:0.040px;-webkit-text-stroke:0.45px #cc3a2a;">failed</div>
<div class="t" style="left:2520.00px;top:708.57px;font-size:25.67px;color:#2f74d0;letter-spacing:1.114px;-webkit-text-stroke:0.45px #2f74d0;">View violations</div>
<div class="t" style="left:2740.30px;top:709.50px;font-size:24.56px;color:#2f74d0;letter-spacing:0.614px;-webkit-text-stroke:0.45px #2f74d0;">View execution results</div>
<div class="r" style="left:2519.40px;top:794.30px;width:207.60px;height:31.50px;background:#f3f3f8;border-radius:6px;"></div>
<div class="t" style="left:2524.40px;top:800.18px;font-size:20.93px;color:#45475a;letter-spacing:0.335px;-webkit-text-stroke:0.55px #45475a;">01/16/2025 03:27pm</div>
<svg class="r" style="left:2462.60px;top:836.60px;width:32.60px;height:35.40px;" viewBox="0 0 32.6 35.6" preserveAspectRatio="none"><defs><linearGradient id="hg" x1="0.3" y1="0" x2="0.7" y2="1"><stop offset="0" stop-color="#86ec55"/><stop offset="1" stop-color="#5db34b"/></linearGradient></defs><path d="M16.3 0.3 Q17.3 0.3 18.2 0.8 L31.3 8.5 Q32.6 9.3 32.6 10.8 V24.6 Q32.6 26.1 31.3 26.9 L18.2 34.6 Q16.3 35.6 14.4 34.6 L1.3 26.9 Q0 26.1 0 24.6 V10.8 Q0 9.3 1.3 8.5 L14.4 0.8 Q15.3 0.3 16.3 0.3 Z" fill="url(#hg)"/><path d="M15.4 21.7 C14.8 24.5 12.5 26.8 10 26.6 C7 26.4 5 24 5.2 21 C5.4 17.5 8 15.4 11 15.8 L19 17.9 C22 18.4 26 17.5 27.4 14 C28.5 11 26 8.3 23 8.4 C20 8.5 17.8 10.5 17 13.4" fill="none" stroke="#fff" stroke-width="2.2" stroke-linecap="round"/></svg>
<div class="t" style="left:2520.00px;top:841.38px;font-size:26.60px;color:#0b0b0d;letter-spacing:0.628px;-webkit-text-stroke:0.45px #0b0b0d;">SLSA provenance verification -</div>
<div class="t" style="left:2912.00px;top:841.38px;font-size:26.60px;color:#56a84a;letter-spacing:0.133px;-webkit-text-stroke:0.45px #56a84a;">successful</div>
<div class="t" style="left:2520.00px;top:901.81px;font-size:24.67px;color:#2f74d0;letter-spacing:1.050px;-webkit-text-stroke:0.45px #2f74d0;">Download SLSA</div>
<svg class="r" style="left:2730.20px;top:904.10px;width:20.00px;height:20.00px;" viewBox="0 0 20 20" preserveAspectRatio="none"><g fill="none" stroke="#2f74d0" stroke-width="2.8" stroke-linecap="round" stroke-linejoin="round"><path d="M10 1.5 V12.5 M5 8 L10 13 L15 8"/><path d="M1.5 12 V18.4 H18.5 V12"/></g></svg>
<div class="t" style="left:2783.60px;top:901.90px;font-size:24.56px;color:#2f74d0;letter-spacing:0.595px;-webkit-text-stroke:0.45px #2f74d0;">View execution results</div>
<div class="r" style="left:2519.40px;top:986.40px;width:207.60px;height:31.50px;background:#f3f3f8;border-radius:6px;"></div>
<div class="t" style="left:2524.40px;top:992.28px;font-size:20.93px;color:#45475a;letter-spacing:0.335px;-webkit-text-stroke:0.55px #45475a;">01/16/2025 03:26pm</div>
<svg class="r" style="left:2462.60px;top:1029.70px;width:32.60px;height:32.80px;" viewBox="0 0 32.6 32.8" preserveAspectRatio="none"><defs><linearGradient id="cg" x1="0.15" y1="0.1" x2="0.85" y2="0.95"><stop offset="0" stop-color="#8ad6e4"/><stop offset="1" stop-color="#3f8deb"/></linearGradient></defs><circle cx="16.3" cy="16.4" r="16.3" fill="url(#cg)"/><path d="M6.2 1.5 L32 23.6" stroke="#fff" stroke-width="2.2"/><circle cx="19.2" cy="12.9" r="6" fill="url(#cg)" stroke="#fff" stroke-width="2.3"/></svg>
<div class="t" style="left:2520.00px;top:1032.78px;font-size:26.60px;color:#0b0b0d;letter-spacing:1.003px;-webkit-text-stroke:0.45px #0b0b0d;">Artifact Integrity Verification -</div>
<div class="t" style="left:2899.90px;top:1032.78px;font-size:26.60px;color:#56a84a;letter-spacing:0.211px;-webkit-text-stroke:0.45px #56a84a;">successful</div>
<div class="t" style="left:2520.00px;top:1087.20px;font-size:24.56px;color:#2f74d0;letter-spacing:0.619px;-webkit-text-stroke:0.45px #2f74d0;">View execution results</div>
<div class="t" style="left:2811.30px;top:1087.20px;font-size:24.56px;color:#2d6aa8;letter-spacing:0.731px;-webkit-text-stroke:0.45px #2d6aa8;">View log entry</div>
<div class="r" style="left:2519.40px;top:1166.10px;width:207.60px;height:31.50px;background:#f3f3f8;border-radius:6px;"></div>
<div class="t" style="left:2524.40px;top:1171.98px;font-size:20.93px;color:#45475a;letter-spacing:0.335px;-webkit-text-stroke:0.55px #45475a;">01/16/2025 03:26pm</div>
<svg class="r" style="left:2462.60px;top:1209.40px;width:32.60px;height:32.80px;" viewBox="0 0 32.6 32.8" preserveAspectRatio="none"><defs><linearGradient id="cg" x1="0.15" y1="0.1" x2="0.85" y2="0.95"><stop offset="0" stop-color="#8ad6e4"/><stop offset="1" stop-color="#3f8deb"/></linearGradient></defs><circle cx="16.3" cy="16.4" r="16.3" fill="url(#cg)"/><path d="M6.2 1.5 L32 23.6" stroke="#fff" stroke-width="2.2"/><circle cx="19.2" cy="12.9" r="6" fill="url(#cg)" stroke="#fff" stroke-width="2.3"/></svg>
<div class="t" style="left:2520.00px;top:1212.98px;font-size:26.60px;color:#0b0b0d;letter-spacing:0.480px;-webkit-text-stroke:0.45px #0b0b0d;">SLSA provenance generation</div>
<div class="t" style="left:2520.00px;top:1273.71px;font-size:24.67px;color:#2f74d0;letter-spacing:1.050px;-webkit-text-stroke:0.45px #2f74d0;">Download SLSA</div>
<svg class="r" style="left:2730.20px;top:1276.00px;width:20.00px;height:20.00px;" viewBox="0 0 20 20" preserveAspectRatio="none"><g fill="none" stroke="#2f74d0" stroke-width="2.8" stroke-linecap="round" stroke-linejoin="round"><path d="M10 1.5 V12.5 M5 8 L10 13 L15 8"/><path d="M1.5 12 V18.4 H18.5 V12"/></g></svg>
<div class="t" style="left:2783.60px;top:1273.80px;font-size:24.56px;color:#2f74d0;letter-spacing:0.595px;-webkit-text-stroke:0.45px #2f74d0;">View execution results</div>
<div class="r" style="left:2519.40px;top:1357.90px;width:207.60px;height:31.50px;background:#f3f3f8;border-radius:6px;"></div>
<div class="t" style="left:2524.40px;top:1363.78px;font-size:20.93px;color:#45475a;letter-spacing:0.335px;-webkit-text-stroke:0.55px #45475a;">01/16/2025 03:26pm</div>
<svg class="r" style="left:2462.60px;top:1401.40px;width:32.60px;height:32.80px;" viewBox="0 0 32.6 32.8" preserveAspectRatio="none"><defs><linearGradient id="cg" x1="0.15" y1="0.1" x2="0.85" y2="0.95"><stop offset="0" stop-color="#8ad6e4"/><stop offset="1" stop-color="#3f8deb"/></linearGradient></defs><circle cx="16.3" cy="16.4" r="16.3" fill="url(#cg)"/><path d="M6.2 1.5 L32 23.6" stroke="#fff" stroke-width="2.2"/><circle cx="19.2" cy="12.9" r="6" fill="url(#cg)" stroke="#fff" stroke-width="2.3"/></svg>
<div class="t" style="left:2519.70px;top:1407.48px;font-size:26.60px;color:#0b0b0d;letter-spacing:0.893px;-webkit-text-stroke:0.45px #0b0b0d;">Artifact Signing</div>
<div class="t" style="left:2519.70px;top:1464.10px;font-size:24.56px;color:#2f74d0;letter-spacing:0.643px;-webkit-text-stroke:0.45px #2f74d0;">View execution results</div>
<div class="t" style="left:2811.10px;top:1464.10px;font-size:24.56px;color:#2d6aa8;letter-spacing:0.731px;-webkit-text-stroke:0.45px #2d6aa8;">View log entry</div>
<div class="r" style="left:2737.50px;top:1397.90px;width:249.60px;height:43.60px;background:#eef8fd;border-radius:8px;"></div>
<div class="t" style="left:2749.10px;top:1406.59px;font-size:25.29px;color:#383946;letter-spacing:-0.129px;-webkit-text-stroke:0.3px #383946;">Signed by Lavakush</div>
<div class="r" style="left:2519.40px;top:1542.40px;width:207.60px;height:31.50px;background:#f3f3f8;border-radius:6px;"></div>
<div class="t" style="left:2524.40px;top:1548.28px;font-size:20.93px;color:#45475a;letter-spacing:0.335px;-webkit-text-stroke:0.55px #45475a;">01/16/2025 03:25pm</div>
<svg class="r" style="left:2462.60px;top:1585.60px;width:32.60px;height:32.80px;" viewBox="0 0 32.6 32.8" preserveAspectRatio="none"><defs><linearGradient id="cg" x1="0.15" y1="0.1" x2="0.85" y2="0.95"><stop offset="0" stop-color="#8ad6e4"/><stop offset="1" stop-color="#3f8deb"/></linearGradient></defs><circle cx="16.3" cy="16.4" r="16.3" fill="url(#cg)"/><path d="M6.2 1.5 L32 23.6" stroke="#fff" stroke-width="2.2"/><circle cx="19.2" cy="12.9" r="6" fill="url(#cg)" stroke="#fff" stroke-width="2.3"/></svg>
<div class="t" style="left:2519.70px;top:1588.78px;font-size:26.60px;color:#0b0b0d;letter-spacing:0.627px;-webkit-text-stroke:0.45px #0b0b0d;">SBOM generated -</div>
<div class="t" style="left:2759.80px;top:1588.78px;font-size:26.60px;color:#e8602f;letter-spacing:0.615px;-webkit-text-stroke:0.45px #e8602f;">drift detected</div>
<div class="t" style="left:2519.70px;top:1650.30px;font-size:24.69px;color:#2f74d0;letter-spacing:1.083px;-webkit-text-stroke:0.45px #2f74d0;">Download SBOM</div>
<svg class="r" style="left:2740.30px;top:1652.60px;width:20.00px;height:20.00px;" viewBox="0 0 20 20" preserveAspectRatio="none"><g fill="none" stroke="#2f74d0" stroke-width="2.8" stroke-linecap="round" stroke-linejoin="round"><path d="M10 1.5 V12.5 M5 8 L10 13 L15 8"/><path d="M1.5 12 V18.4 H18.5 V12"/></g></svg>
<div class="t" style="left:2793.40px;top:1650.40px;font-size:24.56px;color:#2f74d0;letter-spacing:0.624px;-webkit-text-stroke:0.45px #2f74d0;">View execution results</div>
<div class="r" style="left:2447.80px;top:1333.50px;width:866.80px;height:192.90px;border:5.5px solid #e5432a;"></div>
<svg class="r" style="left:3390.00px;top:1865.00px;width:55.00px;height:55.00px;" viewBox="0 0 55 55" preserveAspectRatio="none"><g fill="none" stroke="#5f6178" stroke-width="2.6" stroke-linejoin="round" stroke-linecap="round"><path d="M16.3 21.3 A13.8 13.8 0 1 1 42.6 30 L43.6 37 L36 36.6 Q34 36.6 32.6 37.3"/><path d="M9.5 33 A10 10 0 1 1 17.5 44.4 L10.2 43.6 Z"/></g></svg>
</body></html>
